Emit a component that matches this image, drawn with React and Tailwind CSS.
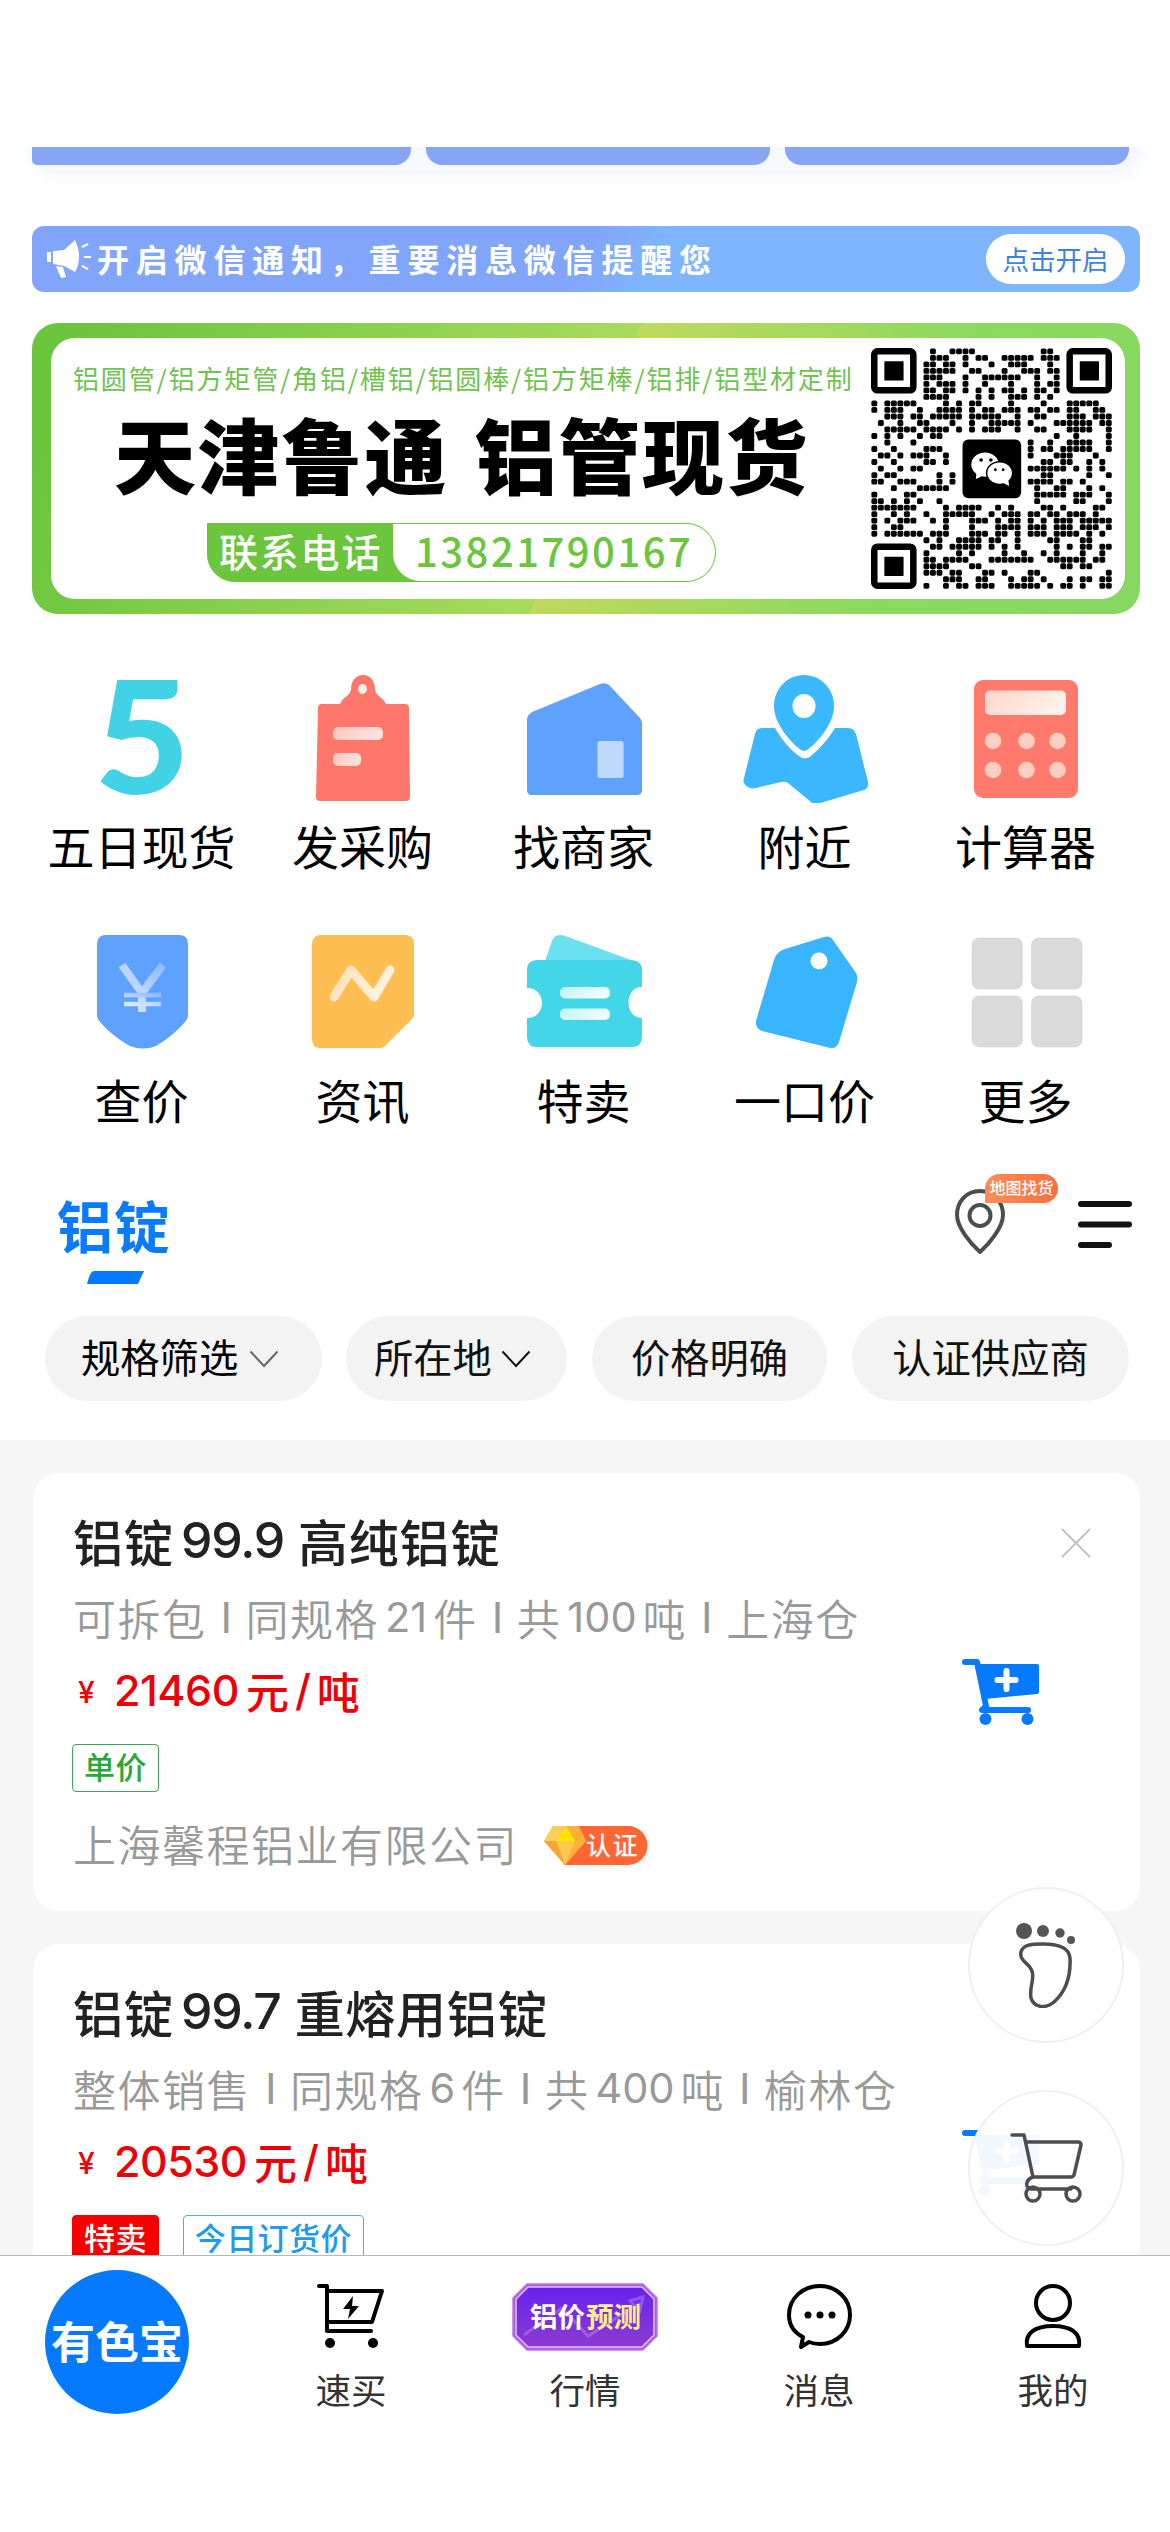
import React from 'react';

// Dark modules of each QR row, as column runs
const qrRows = [
  '9 12-15 26-27', '9-11 14 16-17 20-24 26-28', '8-9 11-12 14 18 21-23 27', '8-12 15-16 20 23-25 27-28',
  '8-10 14 17-22 25 28', '8 10-12 14 17 21 25 27-28', '8-9 11-12 14 16 18 20-21 23 25-26 28', '8-11 16 18 21-23 25 27',
  '0 2-6 11 13 15-16 21 26 30-34', '0 2-4 7 10-13 15 17-18 20-22 24-25 27-28 30-31 34-35',
  '2-4 6-7 9-13 15-19 22 25-26 30-32 34-36', '1 4 7-8 12 15 18-22 24 28-33 35-36',
  '2-6 8-11 13 15 17-19 22 25-26 30-33 36', '0 2 4 7 9-10 28 31 36', '2 6 24 27 30-33 36',
  '0 3 8-10 24 26-27 29-33 36', '1-2 4 6-8 11 24 28-30 34', '0 3 8-9 11 26-27 29-30 33 35',
  '1 4 6-7 24-29 31 33 35', '0 2-3 10 12 26-27 33 36', '0-1 4-6 10 12 24-27 29-30 32',
  '3 7-11 25 28-29 33 35', '0 5-6 25-29 31-33 36', '0-1 3 5 7 10 25 31-32 36',
  '0-6 11 13-16 19 21 26-27 29 34-35', '0 3 5 8 11-15 18 20-22 24-25 27-28 30-32 34',
  '0 2 4-6 9 11 15-17 19 21-22 24 26 28-30 32-36', '0 3-4 11 15 19-22 24-26 28-30 32-34 36',
  '0 2-7 9-11 15-17 19-20 22 24-26 28-31 33 35', '8 10 13-16 18-19 22 27-28 32-33',
  '9-10 12-16 18 20 22 28 30 32-33 35-36', '8 13 15 20 23 26 28 32 35', '8-9 11-14 18-24 27-32 34-35',
  '8-11 15-16 29-30 32-33', '8-10 12-13 17-18 20 24-25 36', '11-13 16-17 21 23-24 26 30 32-33 35-36',
  '8 11 13-14 16-18 21-25 27 29-30 32 35-36'
];

const qrDots = qrRows.flatMap((row, y) =>
  row.split(' ').flatMap((run) => {
    const [from, to = from] = run.split('-').map(Number);
    return Array.from({ length: to - from + 1 }, (_, i) => ({ x: from + i, y }));
  })
);

const QrCode = () => (
  <svg viewBox="0 0 37 37" className="w-[241px] h-[241px]">
    {qrDots.map((d) => (
      <rect key={`${d.x}-${d.y}`} x={d.x + 0.06} y={d.y + 0.06} width="0.9" height="0.9" rx="0.25" />
    ))}
    {[[0, 0], [30, 0], [0, 30]].map(([x, y]) => (
      <g key={`${x}-${y}`}>
        <rect x={x + 0.5} y={y + 0.5} width="6" height="6" rx="0.5" fill="none" stroke="#000" />
        <rect x={x + 2.05} y={y + 2.05} width="2.95" height="2.95" rx="0.1" />
      </g>
    ))}
    <rect x="14.05" y="14.05" width="9" height="9" rx="0.9" />
    <ellipse cx="17.5" cy="17.9" rx="2.1" ry="1.85" fill="#fff" />
    <path d="M16.2 19l-.1 1.1 1.3-.6z" fill="#fff" />
    <ellipse cx="19.75" cy="19.2" rx="2" ry="1.75" fill="#fff" stroke="#000" strokeWidth="0.22" />
    <path d="M20.2 20.7l1 .5-.1-.9z" fill="#fff" />
    <g>
      <circle cx="16.9" cy="17.2" r="0.28" />
      <circle cx="18.4" cy="17.2" r="0.28" />
      <circle cx="19.1" cy="18.7" r="0.22" />
      <circle cx="20.3" cy="18.7" r="0.22" />
    </g>
  </svg>
);

const Gradient = ({ id, from, to, reverse }) => (
  <linearGradient id={id} x1={reverse ? 1 : 0} y1="0" x2={reverse ? 0 : 1} y2={reverse ? 1 : 0.3}>
    <stop offset="0" stopColor={from} />
    <stop offset="1" stopColor={to} />
  </linearGradient>
);

const FiveIcon = () => (
  <text x="61.500" y="121" textAnchor="middle" fontSize="156" fontWeight="900" fill="#41d2e6" transform="scale(1.060 1)" className="font-[Lato,sans-serif]">5</text>
);

const ClipboardIcon = () => (
  <>
    <Gradient id="clip" from="#fdc4c0" to="#fde2de" />
    <path
      d="M24 31h18c3-8 10-7 11-15C53 8 58 2 65 2s12 6 12 14c1 8 8 8 11 15h19q4 0 4 4l1 89q0 4-4 4H22q-4 0-4-4l2-89q0-4 4-4z"
      fill="#ff776a"
    />
    <ellipse cx="64.500" cy="16" rx="4.500" ry="5" fill="#fdeeee" />
    <rect x="35" y="54" width="50" height="13" rx="5" fill="url(#clip)" />
    <rect x="35" y="80" width="28" height="13" rx="5" fill="url(#clip)" />
  </>
);

const HouseIcon = () => (
  <>
    <path d="M8 47q0-5 5-8L81 11q5-2 9 1l31 33q2 2 2 5v67q0 5-5 5H13q-5 0-5-5z" fill="#5ea1ff" />
    <rect x="78.500" y="68" width="26" height="37" rx="2" fill="#c0d9ff" />
  </>
);

const NearbyIcon = () => (
  <>
    <path
      d="M22 58h13c8 14 17 23 24 28q6 5 12 0c7-6 16-15 24-28h13q6 0 8 6l12 48q1 6-4 8l-47 14q-3 1-6-2L48 113q-3-2-7-1l-25 6q-8 2-12-5-1-2 0-5l11-44q1-6 7-6z"
      transform="translate(0 -3)"
      fill="#3bb7ff"
    />
    <path d="M64 2c17 0 30 14 30 31 0 18-17 37-27 44q-3 2-6 0C51 70 34 51 34 33 34 16 47 2 64 2z" fill="#3bb9ff" />
    <ellipse cx="64" cy="33" rx="11.500" ry="12" fill="#fff" />
  </>
);

const CalculatorIcon = () => (
  <>
    <Gradient id="calc" from="#fdd5cb" to="#fef0ea" />
    <rect x="13" y="7" width="104" height="118" rx="9" fill="#ff796c" />
    <rect x="24" y="17.500" width="81" height="24.500" rx="5" fill="url(#calc)" />
    {[68, 97].map((cy) => [32, 65.500, 96.500].map((cx) => (
      <circle key={`${cx}-${cy}`} cx={cx} cy={cy} r="8.300" fill="#fdcfc3" />
    )))}
  </>
);

const PriceIcon = () => (
  <>
    <Gradient id="yen" from="#8dbcff" to="#e0edff" reverse />
    <path d="M20 17q0-9 9-9h73q9 0 9 9v71q0 4-3 7-12 14-29 24-13 5-26 0-18-10-30-24-3-3-3-7z" fill="#5ea1ff" />
    <g fill="none" stroke="url(#yen)" strokeWidth="8">
      <path d="M45 38l20 28 21-28M65 62v23" />
      <path d="M47 68h37M47 77h37" strokeWidth="4.500" />
    </g>
  </>
);

const NewsIcon = () => (
  <>
    <Gradient id="news" from="#fddfba" to="#fff3df" />
    <path d="M14 17q0-9 9-9h84q9 0 9 9v70q0 3-2 5l-27 27q-2 2-5 2H22q-8 0-8-9z" fill="#ffbe52" />
    <path d="M36 70l17-27 23 27 16-27" fill="none" stroke="url(#news)" strokeWidth="9" strokeLinecap="round" strokeLinejoin="round" />
  </>
);

const TicketIcon = () => (
  <>
    <Gradient id="ticket" from="#bdf5fa" to="#effcff" />
    <path d="M26 34l7-20q2-6 8-6 4 0 8 2l63 23z" fill="#6be0f0" />
    <path d="M8 43q0-10 11-10h92q12 0 12 10v17c-18 0-18 31 0 31v19q0 10-10 10H18q-10 0-10-10V91c20 0 20-30 0-30z" fill="#43d5e8" />
    <rect x="41" y="60" width="50" height="11.500" rx="5" fill="url(#ticket)" />
    <rect x="41" y="81.500" width="50" height="11.500" rx="5" fill="url(#ticket)" />
  </>
);

const TagIcon = () => (
  <>
    <path d="M45 22l39-12q6-2 9 3l23 33q2 4 1 9l-18 60q-2 7-9 6l-68-17q-7-3-6-10l18-61q2-8 11-11z" fill="#39b4ff" />
    <ellipse cx="79" cy="34" rx="8.500" ry="8.500" fill="#fff" />
  </>
);

const MoreIcon = () => (
  <>
    {[[11, 11], [70.500, 11], [11, 69], [70.500, 69]].map(([x, y]) => (
      <rect key={`${x}-${y}`} x={x} y={y} width="50.500" height="51" rx="7" fill="#dadada" stroke="#cfcfcf" strokeWidth="0.500" />
    ))}
  </>
);

const menuItems = [
  { icon: FiveIcon, label: '五日现货' },
  { icon: ClipboardIcon, label: '发采购' },
  { icon: HouseIcon, label: '找商家' },
  { icon: NearbyIcon, label: '附近' },
  { icon: CalculatorIcon, label: '计算器' },
  { icon: PriceIcon, label: '查价' },
  { icon: NewsIcon, label: '资讯' },
  { icon: TicketIcon, label: '特卖' },
  { icon: TagIcon, label: '一口价' },
  { icon: MoreIcon, label: '更多' }
];

const Chevron = ({ className }) => (
  <svg viewBox="0 0 30 18" className={`w-[30px] h-[18px] ${className}`} fill="none" stroke="currentColor" strokeWidth="2">
    <path d="M1.500 1.500L15 16 28.500 1.500" />
  </svg>
);

const AddCartIcon = () => (
  <svg viewBox="0 0 80 68" className="absolute left-[928px] top-[185px] w-20 h-[68px]">
    <g fill="#067aff" stroke="#067aff">
      <path d="M4 4h12l9 44-4 4h46" fill="none" strokeWidth="6" strokeLinecap="round" strokeLinejoin="round" />
      <path d="M16 8h60v26L24 39z" strokeWidth="4" strokeLinejoin="round" />
      <circle cx="24.500" cy="61" r="6" stroke="none" />
      <circle cx="66.500" cy="61" r="6" stroke="none" />
    </g>
    <path d="M45.500 13v18M36.500 22h18" stroke="#fff" strokeWidth="6" strokeLinecap="round" />
  </svg>
);

const CertifiedBadge = () => (
  <svg viewBox="0 0 105 40" className="w-[105px] h-10 ml-[25px] mt-[3px]">
    <path d="M12 1h73a19.500 19.500 0 0 1 0 39H21z" fill="#ff6633" />
    <path d="M10 1h26l7 15-21 24L1 16z" fill="#fbb03b" />
    <path d="M10 1h13l-10 15H1z" fill="#f9cf58" />
    <path d="M23 1l-10 15h19z" fill="#ffe500" />
    <path d="M13 16h19L22 40z" fill="#fdc84b" />
    <path d="M1 16h12l9 24z" fill="#f2a63a" />
    <text x="43" y="30" fontSize="25" fontWeight="500" fill="#fff">认证</text>
  </svg>
);

const products = [
  {
    name: '铝锭', grade: '99.9', desc: '高纯铝锭',
    info: ['可拆包', '同规格', '21', '件', '共', '100', '吨', '上海仓'],
    price: '21460',
    tags: [{ text: '单价', style: 'border-[#3da55c] text-[#28a836]' }],
    company: '上海馨程铝业有限公司'
  },
  {
    name: '铝锭', grade: '99.7', desc: '重熔用铝锭',
    info: ['整体销售', '同规格', '6', '件', '共', '400', '吨', '榆林仓'],
    price: '20530',
    tags: [
      { text: '特卖', style: 'border-[#f80000] bg-[#f80000] text-white' },
      { text: '今日订货价', style: 'border-[#5bacc8] text-[#1e9cea]' }
    ]
  }
];

const Divider = () => <span className="ml-[14px] mr-[12px] font-[Inter,sans-serif] font-normal">I</span>;

const ProductCard = ({ item }) => {
  const [pack, spec, count, unit, total, tons, tonUnit, depot] = item.info;

  return (
    <div className="relative h-[438px] w-[1107px] shrink-0 rounded-[26px] bg-white pl-[40px] pt-[35px]">
      <h2 className="flex h-[64px] items-center text-[50px] leading-[64px] font-medium text-[#222]">
        <span className="tracking-[0.500px]">{item.name}</span>
        <span className="ml-[7px] font-[Inter,sans-serif] tracking-[-1.200px]">{item.grade}</span>
        <span className="ml-[14px] tracking-[0.700px]">{item.desc}</span>
      </h2>
      <p className="mt-[13px] flex h-[64px] items-center text-[43px] leading-[64px] tracking-[1.500px] text-[#999] font-[350]">
        <span>{pack}</span>
        <Divider />
        <span>{spec}</span>
        <span className="mx-[6px] font-[Inter,sans-serif] text-[41.500px] tracking-normal font-normal">{count}</span>
        <span>{unit}</span>
        <Divider />
        <span>{total}</span>
        <span className="mx-[6px] font-[Inter,sans-serif] text-[41.500px] tracking-normal font-normal">{tons}</span>
        <span>{tonUnit}</span>
        <Divider />
        <span>{depot}</span>
      </p>
      <p className="mt-[9px] flex h-[64px] items-center text-[43px] leading-[64px] font-medium text-[#ee0006]">
        <span className="ml-[5px] mt-1 w-[36px] font-[Inter,sans-serif] text-[30px]">¥</span>
        <span className="font-[Inter,sans-serif] tracking-[-0.500px]">{item.price}</span>
        <span className="ml-[7px]">元</span>
        <span className="mx-[6px] font-[Inter,sans-serif]">/</span>
        <span>吨</span>
      </p>
      {/* tag border box is pulled 1px out so its outline lines up with the glyph edge */}
      <div className="mt-[22px] flex h-[48px] gap-[24px] -ml-px">
        {item.tags.map((tag) => (
          <span key={tag.text} className={`flex h-[48px] items-center rounded-[4px] border-[1.500px] px-[11px] pb-[4px] text-[31px] leading-[40px] tracking-[0.400px] font-medium ${tag.style}`}>
            {tag.text}
          </span>
        ))}
      </div>
      {item.company && (
        <div className="mt-[19px] flex h-[64px] items-center text-[43px] leading-[64px] tracking-[1.500px] text-[#999] font-[350]">
          <span>{item.company}</span>
          <CertifiedBadge />
        </div>
      )}
      <svg viewBox="0 0 30 30" className="absolute left-[1028px] top-[55px] size-[30px]" stroke="#c3c3c3" strokeWidth="2">
        <path d="M1 1l28 28M29 1L1 29" />
      </svg>
      <AddCartIcon />
    </div>
  );
};

const FlashCartIcon = () => (
  <svg viewBox="0 0 70 66" className="w-[70px] h-[66px]" fill="none" stroke="#000" strokeWidth="4" strokeLinecap="round" strokeLinejoin="round">
    <path d="M3 3h8v45h44M11 8h55L56 39H11" />
    <circle cx="14" cy="60" r="5" fill="#000" stroke="none" />
    <circle cx="57" cy="60" r="5" fill="#000" stroke="none" />
    <path d="M37 13L27 26h7l-2 10 11-13h-7z" fill="#000" stroke="none" />
  </svg>
);

const ForecastIcon = () => (
  <svg viewBox="0 0 146 68" className="w-[146px] h-[68px]">
    <linearGradient id="forecast" x1="0" y1="0" x2="0" y2="1">
      <stop offset="0" stopColor="#6722ee" />
      <stop offset="1" stopColor="#8b3bd0" />
    </linearGradient>
    <path d="M15 1h116l14 14v38l-14 14H15L1 53V15z" fill="#a65ae8" stroke="#b478e6" strokeWidth="1.500" />
    <path d="M16 4h114l12 12v36l-12 12H16L4 52V16z" fill="url(#forecast)" stroke="#eebcff" strokeWidth="1.500" />
    <path d="M12 52l38-27 26 28 52-33M118 18l13-4-3 14z" fill="none" stroke="#b188ef" strokeOpacity="0.500" strokeWidth="3" />
    <text x="18" y="44" fontSize="27.500" fontWeight="700" fill="#fff">铝价</text>
    <text x="74" y="44" fontSize="27.500" fontWeight="700" fill="#ffee8c">预测</text>
  </svg>
);

const MessageIcon = () => (
  <svg viewBox="0 0 66 66" className="size-[66px]" fill="none" stroke="#000" strokeWidth="4" strokeLinejoin="round">
    <path d="M17 54C7 49 3 41 3 32 3 15 17 3 34 3s30 13 30 29-13 29-30 29q-6 0-11-2l-8 5z" />
    <g fill="#000" stroke="none">
      <circle cx="22" cy="32" r="3.500" />
      <circle cx="34" cy="32" r="3.500" />
      <circle cx="46" cy="32" r="3.500" />
    </g>
  </svg>
);

const UserIcon = () => (
  <svg viewBox="0 0 60 66" className="w-[60px] h-[66px]" fill="none" stroke="#000" strokeWidth="4" strokeLinejoin="round">
    <circle cx="30" cy="20" r="17" />
    <path d="M4 63c-2-13 8-20 26-20s28 7 26 20z" />
  </svg>
);

const tabs = [
  { icon: FlashCartIcon, label: '速买' },
  { icon: ForecastIcon, label: '行情' },
  { icon: MessageIcon, label: '消息' },
  { icon: UserIcon, label: '我的' }
];

const App = () => (
  <div className="relative flex h-[2532px] w-[1170px] flex-col overflow-hidden bg-white font-['Noto_Sans_CJK_SC',sans-serif] text-black">
    {/* Cut-off cards at the top of the scroll area */}
    <div className="mt-[147px] h-[79px] shrink-0 overflow-hidden">
      <div className="ml-8 flex h-[28px] w-[1108px] gap-[15px] rounded-b-[28px] bg-[#f5f9ff] shadow-[0_0_14px_6px_#f7faff]">
        <div className="h-[18px] w-[379px] rounded-br-[16px] rounded-bl-[5px] bg-[#86a6f3]" />
        <div className="h-[18px] w-[344px] rounded-b-[16px] bg-[#86a6f3]" />
        <div className="h-[18px] w-[344px] rounded-b-[16px] bg-[#86a6f3]" />
      </div>
    </div>

    {/* WeChat notice */}
    <div className="ml-8 flex h-[66px] w-[1108px] shrink-0 items-center rounded-[12px] bg-[linear-gradient(118deg,#82a5fc_50%,#7fb5fe_56%)] pl-[14px] pr-[15px]">
      <svg viewBox="0 0 46 40" className="h-10 w-[46px]" fill="#fff">
        <path d="M1 13h4v10H1zM7 12l11-1L29 1q4 8 4 17t-4 15l-11-6-11-2zM10 27l7 1 3 10-5 1z" />
        <path d="M36 8l6-3M38 18h7M36 27l6 3" stroke="#fff" strokeWidth="2" />
      </svg>
      <span className="ml-[5px] pb-[3px] text-[32px] leading-[48px] tracking-[6.800px] font-bold text-white">开启微信通知，重要消息微信提醒您</span>
      <button className="ml-auto h-[50px] w-[139px] rounded-full bg-white text-[26.500px] leading-[46px] text-[#3b82e4]">点击开启</button>
    </div>

    {/* Ad banner */}
    <div className="ml-8 mt-[31px] h-[291px] w-[1108px] shrink-0 rounded-[26px] bg-[linear-gradient(111deg,#6bc53d_4%,#a8db5c_50%,#bfd95c_50%,#8ad95f_78%,#86d862_100%)] pl-[19px] pr-[15px] pt-[15px]">
      <div className="flex h-[261px] rounded-[24px] bg-white">
        <div className="flex w-[820px] flex-col">
          <p className="ml-[22px] mt-[20px] whitespace-nowrap text-[26px] leading-[40px] tracking-[1.850px] text-[#6fc351]">铝圆管/铝方矩管/角铝/槽铝/铝圆棒/铝方矩棒/铝排/铝型材定制</p>
          <p className="ml-[63px] mt-[9px] flex h-[98px] gap-[27px] whitespace-nowrap text-[82px] leading-[92px] tracking-[1.500px] font-black">
            <span>天津鲁通</span>
            <span>铝管现货</span>
          </p>
          <div className="ml-[156px] mt-[18px] flex h-[59px] w-[509px] rounded-r-[30px] rounded-bl-[28px] border border-[#6bc53d] bg-[#6bc53d]">
            <span className="w-[185px] pl-[11px] text-[39px] leading-[52px] tracking-[1.800px] font-medium text-white">联系电话</span>
            <span className="flex-1 rounded-r-[29px] rounded-bl-[28px] bg-white pl-[22px] text-[40px] leading-[52px] tracking-[2.500px] font-medium text-[#6bc53d]">13821790167</span>
          </div>
        </div>
        <div className="mt-[10px]">
          <QrCode />
        </div>
      </div>
    </div>

    {/* Shortcut grid */}
    <div className="ml-[31px] mt-[59px] grid h-[508px] w-[1105px] shrink-0 grid-cols-5 grid-rows-[254px_254px]">
      {menuItems.map((item) => (
        <div key={item.label} className="flex flex-col items-center">
          <svg viewBox="0 0 130 130" className="size-[130px]"><item.icon /></svg>
          <span className="mt-[8px] whitespace-nowrap text-[47px] leading-[68px]">{item.label}</span>
        </div>
      ))}
    </div>

    {/* Category header */}
    <div className="mt-[5px] flex h-[130px] shrink-0 pl-[57px]">
      <div className="flex flex-col">
        <span className="text-[56px] leading-[76px] tracking-[1px] font-bold text-[#0a7bff]">铝锭</span>
        <svg viewBox="0 0 57 13" className="ml-[30px] mt-[9px] h-[13px] w-[57px]"><path d="M7 0h50l-6 13H0q3-13 7-13z" fill="#067aff" /></svg>
      </div>
      <div className="relative ml-auto mr-[38px] flex">
        <svg viewBox="0 0 52 66" className="mt-[2px] h-[66px] w-[52px]" fill="none" stroke="#4d4d4d" strokeWidth="4">
          <path d="M26 3c14 0 23 11 23 24 0 12-13 28-23 37C16 55 3 39 3 27 3 14 12 3 26 3z" />
          <circle cx="26" cy="27.500" r="10.500" />
        </svg>
        <svg viewBox="0 0 54 48" className="ml-[72px] mt-[15px] h-12 w-[54px]" stroke="#111" strokeWidth="6" strokeLinecap="round">
          <path d="M3 3h48M3 23.500h48M3 44h28" />
        </svg>
        <span className="absolute left-[31px] -top-[12px] h-[29px] w-[73px]">
          <span className="block h-[29px] rounded-full rounded-bl-[8px] bg-gradient-to-r from-[#f98e58] to-[#ff6c3e] text-center text-[16px] leading-[26px] font-medium text-white">地图找货</span>
        </span>
      </div>
    </div>

    {/* Filters */}
    <div className="ml-[45px] flex h-[124px] shrink-0 text-[39.300px] leading-[79px]">
      <span className="flex h-[85px] w-[277px] items-center rounded-full bg-[#f3f3f3] pb-[6px] pl-[36px]">规格筛选<Chevron className="ml-[11px] mt-[6px] text-[#666]" /></span>
      <span className="ml-[24px] flex h-[85px] w-[221px] items-center rounded-full bg-[#f3f3f3] pb-[6px] pl-[28px] text-[#111]">所在地<Chevron className="ml-[9px] mt-[6px]" /></span>
      <span className="ml-[25px] h-[85px] w-[235px] rounded-full bg-[#f3f3f3] text-center text-[#111]">价格明确</span>
      <span className="ml-[25px] h-[85px] w-[277px] rounded-full bg-[#f3f3f3] text-center text-[#111]">认证供应商</span>
    </div>

    {/* Listings */}
    <div className="flex min-h-0 flex-1 flex-col gap-[33px] overflow-hidden bg-[#f6f6f6] pl-[33px] pt-[33px]">
      {products.map((item) => <ProductCard key={item.grade} item={item} />)}
    </div>

    {/* Floating buttons */}
    <div className="absolute right-[46px] top-[1887px] flex flex-col gap-[47px]">
      <button className="flex size-[156px] items-center justify-center rounded-full border-2 border-[#efefef] bg-white/95">
        <svg viewBox="0 0 62 86" className="h-[86px] w-[62px]" fill="none" stroke="#4d4d4f" strokeWidth="3.500">
          <path d="M6 30c2-7 9-8 22-8s26 2 27 14c1 20-5 34-16 44-8 7-20 6-23-4-2-12 4-18 1-27C14 41 4 39 6 30z" />
          <g fill="#555" stroke="none">
            <circle cx="9" cy="9" r="8" />
            <circle cx="28" cy="9" r="6" />
            <circle cx="45" cy="11" r="4.700" />
            <circle cx="56" cy="18" r="4" />
          </g>
        </svg>
      </button>
      <button className="flex size-[156px] items-center justify-center rounded-full border-2 border-[#efefef] bg-white/95">
        <svg viewBox="0 0 74 72" className="h-[72px] w-[74px]" fill="none" stroke="#4d4d4f" strokeWidth="3.500" strokeLinecap="round" strokeLinejoin="round">
          <path d="M3 3h12l9 42h38q2 0 3-2l7-30q0-3-3-3H17M24 45c-8 3-8 11-2 12h40" />
          <circle cx="24" cy="62" r="7" />
          <circle cx="64" cy="62" r="7" />
        </svg>
      </button>
    </div>

    {/* Bottom tab bar */}
    <nav className="grid h-[277px] shrink-0 grid-cols-5 border-t-[1.500px] border-[#b8b8b8] bg-white">
      <div className="flex justify-center pt-[14px]">
        <div className="size-[144px] rounded-full bg-[#067aff] text-center text-[44px] leading-[140px] font-bold text-white">有色宝</div>
      </div>
      {tabs.map((tab) => (
        <div key={tab.label} className="flex flex-col items-center pt-[27px]">
          <div className="flex h-[68px] items-start"><tab.icon /></div>
          <span className="mt-[12px] text-[35.500px] leading-[52px] text-[#333]">{tab.label}</span>
        </div>
      ))}
    </nav>
  </div>
);

export default App;
